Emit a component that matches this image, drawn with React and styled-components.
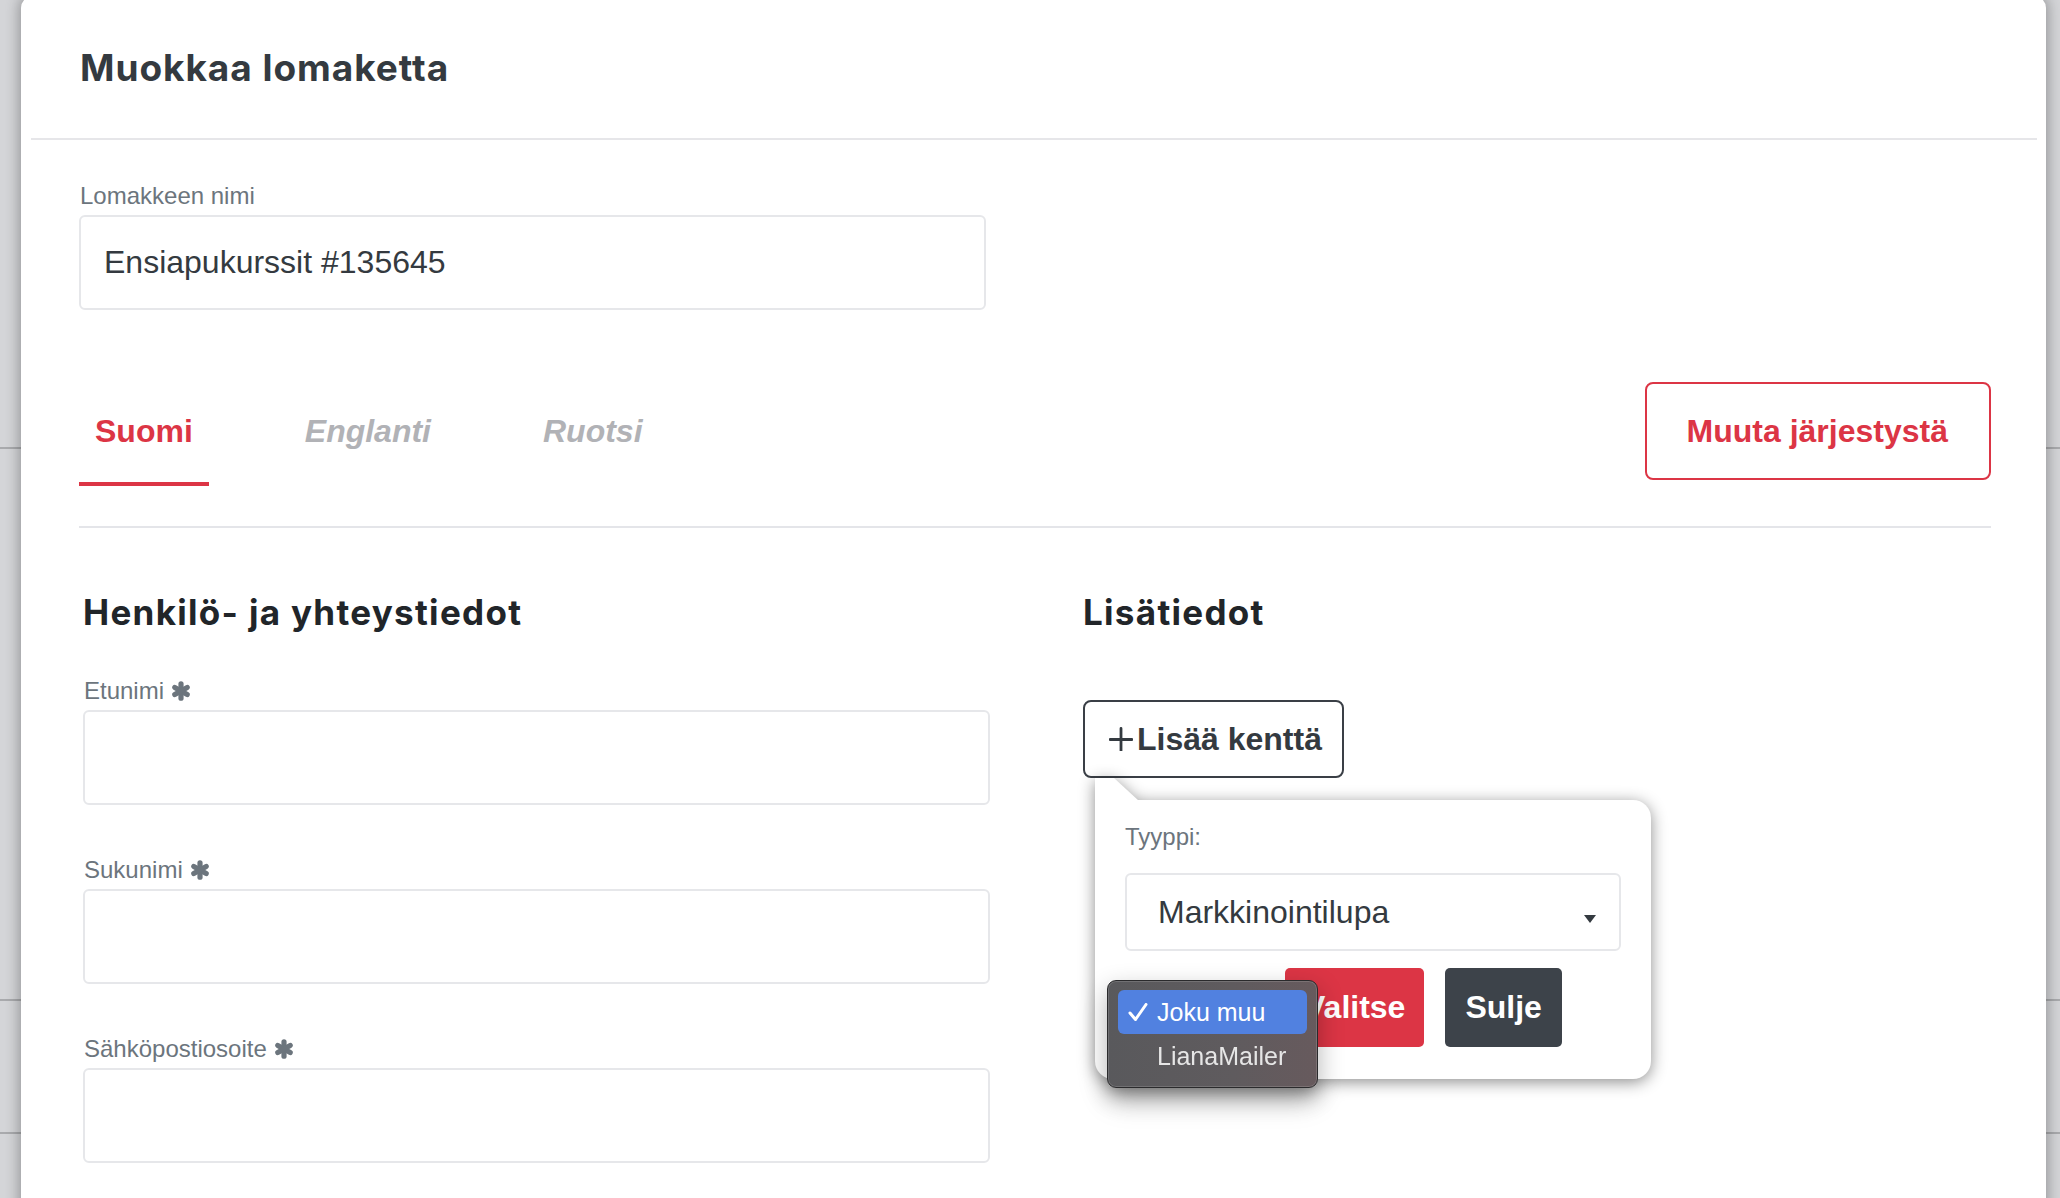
import React from 'react';
import styled, { createGlobalStyle } from 'styled-components';

const GlobalStyle = createGlobalStyle`
  html, body { margin: 0; padding: 0; }
  body {
    background: #d4d5d8;
    font-family: "Liberation Sans", Arial, Helvetica, sans-serif;
    overflow: hidden;
  }
  * { box-sizing: border-box; }
`;

const Screen = styled.div`
  position: relative;
  width: 2060px;
  height: 1198px;
  overflow: hidden;
  background: #d4d5d8;
`;

/* the list page that sits behind the dimmed backdrop */
const Underlay = styled.div`
  display: flex;
  flex-direction: column;
`;

const UnderRow = styled.div`
  height: ${(p) => p.$h}px;
  border-bottom: 2px solid #a9aaad;
`;

const Modal = styled.div`
  position: absolute;
  top: -4px;
  left: 21px;
  width: 2025px;
  height: 1260px;
  background: #fff;
  border-radius: 12px;
  box-shadow: 0 0 14px 2px rgba(0, 0, 0, 0.3);
`;

const Header = styled.header`
  height: 144px;
  margin: 0 9px 0 10px;
  padding: 50px 0 0 49px;
  border-bottom: 2px solid #e6e6e9;
`;

const Title = styled.h1`
  margin: 0;
  font-family: Inter, "Noto Sans", sans-serif;
  font-weight: 700;
  font-size: 37px;
  line-height: 44px;
  letter-spacing: 0.95px;
  color: #343a40;
`;

const Body = styled.div`
  padding: 42px 55px 0 58px;
`;

const Label = styled.label`
  display: flex;
  align-items: center;
  gap: 7px;
  height: 28px;
  margin: 0 0 5px 1px;
  font-size: 24px;
  line-height: 28px;
  color: #6c757d;
`;

const TextBox = styled.div`
  display: flex;
  align-items: center;
  width: ${(p) => p.$w || 907}px;
  height: 95px;
  padding-left: 23px;
  border: 2px solid #e6e7ea;
  border-radius: 6px;
  background: #fff;
  font-size: 32px;
  color: #343a40;
`;

const NameField = styled.div`
  width: 908px;
`;

const TabsBar = styled.div`
  display: flex;
  justify-content: space-between;
  align-items: center;
  margin-top: 66px;
  padding-bottom: 40px;
  border-bottom: 2px solid #e4e5e9;
`;

const Tabs = styled.nav`
  display: flex;
  gap: 80px;
`;

const Tab = styled.a`
  display: flex;
  align-items: center;
  height: 110px;
  padding: 4px 16px 0;
  border-bottom: 4px solid ${(p) => (p.$active ? '#dc3545' : 'transparent')};
  font-size: 32px;
  font-weight: 700;
  font-style: ${(p) => (p.$active ? 'normal' : 'italic')};
  color: ${(p) => (p.$active ? '#dc3545' : '#b1b2b6')};
  cursor: pointer;
`;

const OutlineButton = styled.button`
  display: inline-flex;
  align-items: center;
  justify-content: center;
  height: ${(p) => p.$h}px;
  padding: ${(p) => p.$pad};
  gap: 4px;
  border: 2px solid ${(p) => p.$border};
  border-radius: 8px;
  background: #fff;
  color: ${(p) => p.$color};
  font-family: "Liberation Sans", Arial, sans-serif;
  font-size: 32px;
  font-weight: 700;
  cursor: pointer;
`;

const Columns = styled.div`
  display: grid;
  grid-template-columns: 908px 1fr;
  column-gap: 92px;
  padding: 63px 0 0 4px;
`;

const Column = styled.section`
  display: flex;
  flex-direction: column;
  align-items: flex-start;
`;

const Heading = styled.h2`
  margin: 0 0 44px;
  font-family: Inter, "Noto Sans", sans-serif;
  font-weight: 700;
  font-size: 35px;
  line-height: 42px;
  letter-spacing: 1.3px;
  color: #212529;
`;

const Field = styled.div`
  margin-bottom: 51px;
`;

const AddWrap = styled.div`
  position: relative;
  margin-top: 23px;
`;

const Popover = styled.div`
  position: absolute;
  top: calc(100% + 22px);
  left: 12px;
  width: 556px;
  height: 279px;
  padding: 23px 30px 32px;
  background: #fff;
  border-radius: 0 18px 18px 18px;
  filter: drop-shadow(0 3px 8px rgba(0, 0, 0, 0.45));

  &::before {
    content: '';
    position: absolute;
    left: 0;
    top: -22px;
    width: 44px;
    height: 23px;
    background: #fff;
    clip-path: polygon(0 0, 19px 0, 44px 100%, 0 100%);
  }
`;

const PopLabel = styled(Label)`
  margin: 0 0 22px;
`;

const SelectBox = styled.div`
  position: relative;
  display: flex;
  align-items: center;
  width: 496px;
  height: 78px;
  padding-left: 31px;
  border: 2px solid #e6e7ea;
  border-radius: 6px;
  font-size: 32px;
  color: #343a40;
`;

const Caret = styled.span`
  position: absolute;
  right: 23px;
  top: 40px;
  width: 0;
  height: 0;
  border-left: 6.5px solid transparent;
  border-right: 6.5px solid transparent;
  border-top: 8px solid #343a40;
`;

const ButtonRow = styled.div`
  position: relative;
  display: flex;
  align-items: center;
  gap: 20px;
  margin-top: 17px;
`;

const MiniSelect = styled.div`
  width: 140px;
  height: 46px;
  border-radius: 6px;
  background: #fff;
`;

const SolidButton = styled.button`
  height: 79px;
  padding: 0 ${(p) => p.$padX}px;
  border: none;
  border-radius: 5px;
  background: ${(p) => p.$bg};
  color: #fff;
  font-family: "Liberation Sans", Arial, sans-serif;
  font-size: 32px;
  font-weight: 700;
  cursor: pointer;
  & + & { margin-left: 1px; }
`;

/* native popup list of the small select, opened */
const NativeMenu = styled.ul`
  position: absolute;
  left: -18px;
  top: 12px;
  width: 211px;
  height: 108px;
  margin: 0;
  padding: 9px 10px;
  list-style: none;
  border: 1px solid #2a2a2c;
  border-radius: 9px;
  background: linear-gradient(90deg, #59595c 0%, #5f5b5e 60%, #675a5d 100%);
  box-shadow: inset 0 0 0 1px rgba(255, 255, 255, 0.14), 0 10px 26px rgba(0, 0, 0, 0.3);
`;

const MenuItem = styled.li`
  position: relative;
  height: 44px;
  padding-left: 39px;
  border-radius: 6px;
  background: ${(p) => (p.$selected ? '#5181e0' : 'transparent')};
  font-size: 25px;
  line-height: 44px;
  color: ${(p) => (p.$selected ? '#fff' : '#e6e6e6')};
`;

const Check = styled.svg`
  position: absolute;
  left: 10px;
  top: 13px;
`;

const PlusIcon = () => (
  <svg width="24" height="24" viewBox="0 0 24 24" aria-hidden="true">
    <path d="M1 12.5H23M12 1.5V23.5" stroke="#343a40" strokeWidth="2.8" strokeLinecap="round" fill="none" />
  </svg>
);

/* heavy six-spoke asterisk marking a required field */
const Required = () => (
  <svg width="20" height="20" viewBox="0 0 20 20" aria-hidden="true">
    <g stroke="#6c757d" strokeWidth="5.2" strokeLinecap="round" fill="none">
      <path d="M10 2.8V17.2" />
      <path d="M3.8 6.4L16.2 13.6" />
      <path d="M3.8 13.6L16.2 6.4" />
    </g>
  </svg>
);

const personFields = ['Etunimi', 'Sukunimi', 'Sähköpostiosoite'];

export default function App() {
  return (
    <Screen>
      <GlobalStyle />
      <Underlay>
        <UnderRow $h={449} />
        <UnderRow $h={552} />
        <UnderRow $h={133} />
      </Underlay>

      <Modal>
        <Header>
          <Title>Muokkaa lomaketta</Title>
        </Header>

        <Body>
          <NameField>
            <Label>Lomakkeen nimi</Label>
            <TextBox>Ensiapukurssit #135645</TextBox>
          </NameField>

          <TabsBar>
            <Tabs>
              <Tab $active>Suomi</Tab>
              <Tab>Englanti</Tab>
              <Tab>Ruotsi</Tab>
            </Tabs>
            <OutlineButton $border="#dc3545" $color="#dc3545" $h={98} $pad="0 41px 0 40px">
              Muuta järjestystä
            </OutlineButton>
          </TabsBar>

          <Columns>
            <Column>
              <Heading>Henkilö- ja yhteystiedot</Heading>
              {personFields.map((name) => (
                <Field key={name}>
                  <Label>
                    {name}
                    <Required />
                  </Label>
                  <TextBox />
                </Field>
              ))}
            </Column>

            <Column>
              <Heading>Lisätiedot</Heading>
              <AddWrap>
                <OutlineButton $border="#3a3f46" $color="#343a40" $h={78} $pad="0 20px 0 24px">
                  <PlusIcon />
                  Lisää kenttä
                </OutlineButton>

                <Popover>
                  <PopLabel>Tyyppi:</PopLabel>
                  <SelectBox>
                    Markkinointilupa
                    <Caret />
                  </SelectBox>
                  <ButtonRow>
                    <MiniSelect />
                    <SolidButton $bg="#dc3545" $padX={19}>Valitse</SolidButton>
                    <SolidButton $bg="#3d434a" $padX={20}>Sulje</SolidButton>
                    <NativeMenu>
                      <MenuItem $selected>
                        <Check width="20" height="18" viewBox="0 0 20 18">
                          <path d="M2 10 L7.5 16.5 L18 1.5" stroke="#fff" strokeWidth="3" fill="none" strokeLinecap="round" strokeLinejoin="round" />
                        </Check>
                        Joku muu
                      </MenuItem>
                      <MenuItem>LianaMailer</MenuItem>
                    </NativeMenu>
                  </ButtonRow>
                </Popover>
              </AddWrap>
            </Column>
          </Columns>
        </Body>
      </Modal>
    </Screen>
  );
}
